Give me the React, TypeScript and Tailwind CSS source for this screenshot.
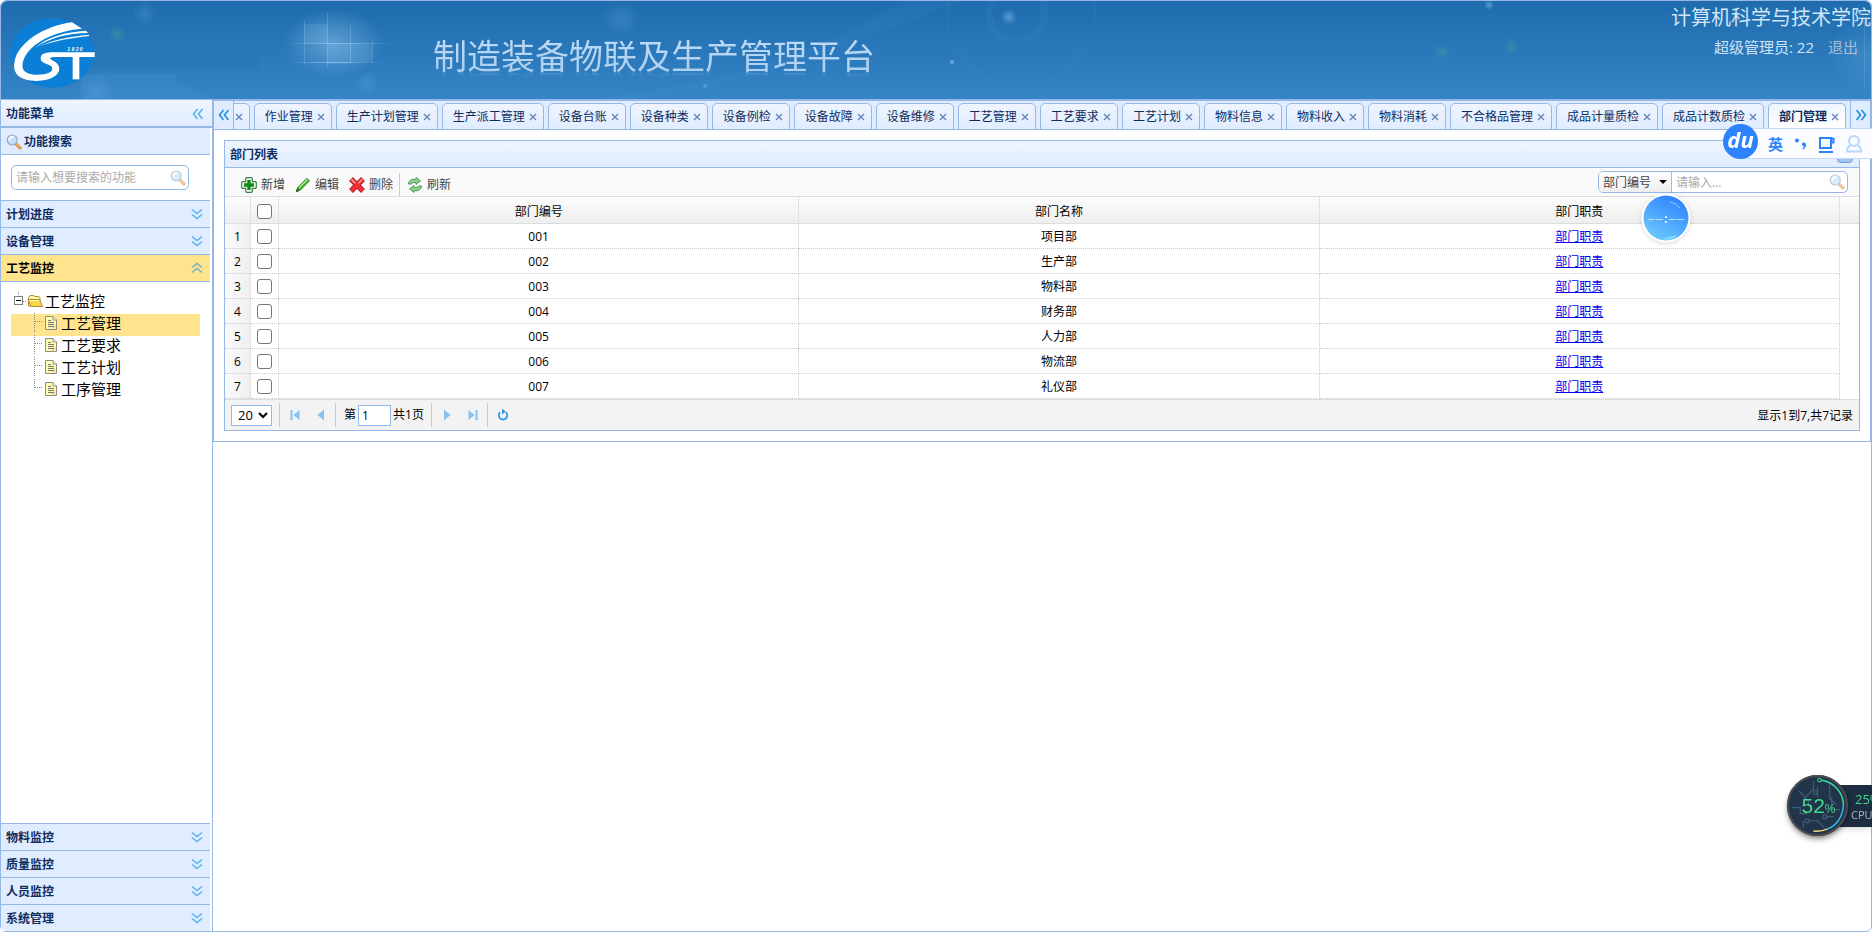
import { useState, type ReactNode } from 'react'

interface Department {
  code: string
  name: string
}

const departments: Department[] = [
  { code: '001', name: '项目部' },
  { code: '002', name: '生产部' },
  { code: '003', name: '物料部' },
  { code: '004', name: '财务部' },
  { code: '005', name: '人力部' },
  { code: '006', name: '物流部' },
  { code: '007', name: '礼仪部' },
]

const tabs = [
  '工序管理',
  '作业管理',
  '生产计划管理',
  '生产派工管理',
  '设备台账',
  '设备种类',
  '设备例检',
  '设备故障',
  '设备维修',
  '工艺管理',
  '工艺要求',
  '工艺计划',
  '物料信息',
  '物料收入',
  '物料消耗',
  '不合格品管理',
  '成品计量质检',
  '成品计数质检',
  '部门管理',
]

const treeItems = ['工艺管理', '工艺要求', '工艺计划', '工序管理']

/* ---------- icons ---------- */

function DoubleChevron({ className = '' }: { className?: string }) {
  return (
    <svg viewBox="0 0 12 12" className={`size-3 ${className}`} fill="none" stroke="currentColor" strokeWidth="1.6">
      <path d="M1 1.5 6 5.5 11 1.5M1 6.5 6 10.5 11 6.5" />
    </svg>
  )
}

function SearchIcon({ className = '' }: { className?: string }) {
  return (
    <svg viewBox="0 0 16 16" className={`size-4 shrink-0 ${className}`}>
      <path d="m10 10 4 3.8" stroke="#c47a2c" strokeWidth="3" strokeLinecap="round" />
      <path d="m10 9.8 4 3.8" stroke="#f6b35e" strokeWidth="1.6" strokeLinecap="round" />
      <circle cx="6.2" cy="6" r="5" fill="#bfe0fb" stroke="#9aa9b8" strokeWidth="1.2" />
      <path d="M3.2 6a3.2 3.2 0 0 1 4-3" stroke="#fff" strokeWidth="1.6" fill="none" strokeLinecap="round" />
    </svg>
  )
}

function AddIcon() {
  return (
    <svg viewBox="0 0 16 16" className="size-4">
      <path
        d="M5.5.7h5l.8.8v3.2h3.2l.8.8v5l-.8.8h-3.2v3.2l-.8.8h-5l-.8-.8v-3.2H1.5l-.8-.8v-5l.8-.8h3.2V1.5z"
        fill="#f4fbf2"
        stroke="#3f7f4b"
        strokeWidth="1.2"
      />
      <path d="M6.3 3h3.4v3.3H13v3.4H9.7V13H6.3V9.7H3V6.3h3.3z" fill="#138a13" />
    </svg>
  )
}

function EditIcon() {
  return (
    <svg viewBox="0 0 16 16" className="size-4">
      <path d="M1.2 14.8 2.6 10.6 11.8 1.4l2.6 2.4-9.2 9.4z" fill="#43b62b" stroke="#2c7d26" />
      <path d="m4 10.8 8.4-8.4" stroke="#b5ee8f" strokeWidth="1.4" />
      <path d="m1 15 1.2-3.6 2.4 2.2z" fill="#305c2b" />
    </svg>
  )
}

function DeleteIcon() {
  return (
    <svg viewBox="0 0 16 16" className="size-4">
      <path d="m2 2 12 12M14 2 2 14" stroke="#b3161b" strokeWidth="5.4" />
      <path d="m2.4 2.4 11.2 11.2M13.6 2.4 2.4 13.6" stroke="#ee3236" strokeWidth="3.8" />
      <path d="m2.4 2.4 4 3.8M13.2 2.4l-3.8 3.8" stroke="#f99" strokeWidth="1.6" />
    </svg>
  )
}

function ReloadIcon() {
  return (
    <svg viewBox="0 0 16 16" className="size-4" fill="#8fd08d" stroke="#4d9b57" strokeLinejoin="round">
      <path d="M1.5 7C1.5 3.6 4.5 1.8 9 2.3V.6L13.500 4 9 7.400V5.500C6.500 5.200 5 5.600 4.400 7z" />
      <path d="M14.5 9c0 3.4-3 5.2-7.500 4.700v1.700L2.500 12 7 8.600v1.900c2.500.3 4-.1 4.600-1.500z" />
    </svg>
  )
}

function FolderIcon() {
  return (
    <svg viewBox="0 0 16 16" className="size-4">
      <path d="M1.5 4.5V13H13V4.5L11.5 3.5H8L6.5 2.5H3z" fill="#fff3a8" stroke="#b08d2e" />
      <path d="M1 6.5h11.5l3 7H4z" fill="#f8d64e" stroke="#b08d2e" />
      <path d="M2.5 7.5h9.5" stroke="#fff6c2" />
    </svg>
  )
}

function FileIcon() {
  return (
    <svg viewBox="0 0 16 16" className="size-4">
      <path d="M2.5 1.5H10L13.5 5v9.5h-11z" fill="#fffcae" stroke="#8d8d86" />
      <path d="M10 1.5V5h3.5" fill="#fff" stroke="#8d8d86" />
      <path d="M12.5 9.5v4H8z" fill="#f5d59a" />
      <path d="M5 5.5h3M5 7.5h6M5 9.5h6M5 11.5h6" stroke="#777" />
    </svg>
  )
}

function Logo() {
  return (
    <svg viewBox="0 0 300 246" className="h-[82px] w-[100px]" role="img" aria-label="CST 1920">
      <ellipse cx="144" cy="123" rx="126" ry="104" fill="#0b7fd6" />
      {/* sweeping arc and its thin tails */}
      <path
        d="M32 148C42 92 120 42 204 31L234 50C168 55 88 84 62 136C46 170 60 186 92 188C124 190 150 182 144 166C140 154 112 158 110 140C109 126 122 122 142 121H272V135H150C132 136 138 142 150 148C180 164 170 204 100 207C56 208 22 190 32 148Z"
        fill="#fff"
      />
      <path d="M92 108C130 74 184 60 246 56L252 63C190 64 136 78 92 108Z" fill="#fff" />
      <path d="M104 104C150 82 196 74 254 68L256 72C200 78 152 86 104 104Z" fill="#fff" />
      <rect x="206" y="128" width="20" height="74" fill="#fff" />
      <text x="190" y="116" fontSize="15" fontWeight="700" fontStyle="italic" fill="#fff" fontFamily="Liberation Sans, sans-serif">
        1 9 2 0
      </text>
    </svg>
  )
}

/* Faint light shapes over the banner gradient */
function BannerArt() {
  return (
    <svg className="absolute inset-0 size-full" preserveAspectRatio="xMinYMin slice" aria-hidden="true">
      <defs>
        <radialGradient id="glow">
          <stop offset="0" stopColor="#9fd0f5" stopOpacity="0.45" />
          <stop offset="1" stopColor="#9fd0f5" stopOpacity="0" />
        </radialGradient>
        <radialGradient id="haze">
          <stop offset="0" stopColor="#6fb4e6" stopOpacity="0.25" />
          <stop offset="1" stopColor="#6fb4e6" stopOpacity="0" />
        </radialGradient>
        <radialGradient id="spark">
          <stop offset="0" stopColor="#3fae8a" stopOpacity="0.4" />
          <stop offset="1" stopColor="#3fae8a" stopOpacity="0" />
        </radialGradient>
        <linearGradient id="beam">
          <stop offset="0" stopColor="#bfe2fa" stopOpacity="0" />
          <stop offset="0.5" stopColor="#bfe2fa" stopOpacity="0.5" />
          <stop offset="1" stopColor="#bfe2fa" stopOpacity="0" />
        </linearGradient>
      </defs>
      <ellipse cx="332" cy="42" rx="50" ry="34" fill="url(#glow)" />
      <g fill="#a8d4f5" fillOpacity="0.12">
        <rect x="303" y="23" width="24" height="20" />
        <rect x="326" y="43" width="24" height="20" />
        <rect x="349" y="43" width="22" height="18" />
      </g>
      <rect x="284" y="42" width="110" height="1" fill="url(#beam)" />
      <rect x="284" y="61" width="100" height="1" fill="url(#beam)" />
      <g fill="#bfe2fa" fillOpacity="0.22">
        <rect x="303" y="20" width="1" height="44" />
        <rect x="326" y="12" width="1" height="54" />
        <rect x="349" y="24" width="1" height="38" />
        <rect x="371" y="40" width="1" height="22" />
      </g>
      <rect x="88" y="53" width="170" height="17" fill="#1a62a3" fillOpacity="0.15" />
      <path d="M80 73h99l-6 5 40 20H80z" fill="#5aa6dc" fillOpacity="0.14" />
      <circle cx="116" cy="33" r="9" fill="url(#spark)" />
      <circle cx="95" cy="92" r="20" fill="url(#haze)" />
      <circle cx="144" cy="12" r="12" fill="url(#haze)" />
      <circle cx="366" cy="82" r="12" fill="url(#haze)" />
      <circle cx="620" cy="18" r="18" fill="url(#haze)" />
      <circle cx="1016" cy="12" r="28" fill="none" stroke="#5aa2d8" strokeOpacity="0.08" strokeWidth="8" />
      <circle cx="1020" cy="10" r="74" fill="none" stroke="#5aa2d8" strokeOpacity="0.08" strokeWidth="2" />
      <circle cx="1008" cy="16" r="8" fill="url(#glow)" />
      <circle cx="951" cy="61" r="2" fill="#7fc0ec" fillOpacity="0.7" />
      <circle cx="704" cy="85" r="2" fill="#7fc0ec" fillOpacity="0.4" />
      <path d="M640 98C780 74 860 40 960 0h-60C820 50 740 80 590 98z" fill="#5aa6dc" fillOpacity="0.08" />
      <circle cx="1441" cy="51" r="8" fill="url(#spark)" />
      <circle cx="1510" cy="45" r="8" fill="url(#spark)" />
      <circle cx="1488" cy="4" r="5" fill="url(#glow)" />
      <circle cx="1868" cy="54" r="40" fill="url(#haze)" />
      <rect x="1863" y="20" width="1" height="66" fill="#bfe2fa" fillOpacity="0.15" />
    </svg>
  )
}

/* ---------- layout ---------- */

function Header() {
  return (
    <header className="relative flex h-[99px] justify-between overflow-hidden rounded-t-md border-b border-[#95b8e7] bg-linear-to-b from-[#1e6cae] to-[#3584c6]">
      <BannerArt />
      <div className="relative flex items-start">
        <div className="pt-[11px] pl-[3px]">
          <Logo />
        </div>
        <h1 className="ml-[329px] bg-linear-to-b from-[#d3e7f9] to-[#a9cdee] bg-clip-text pt-8 text-[34px] leading-[46px] text-transparent [-webkit-box-reflect:below_-14px_linear-gradient(transparent_84%,rgba(0,0,0,0.5)_100%)]">
          制造装备物联及生产管理平台
        </h1>
      </div>
      <div className="relative text-right text-[#cfe4f6]">
        <div className="pt-px text-xl leading-8">计算机科学与技术学院</div>
        <div className="flex justify-end gap-[14px] pr-[13px] text-[15px] leading-[26px]">
          <span>超级管理员: 22</span>
          <a href="#logout" className="text-[#a9bdd0]">
            退出
          </a>
        </div>
      </div>
    </header>
  )
}

function AccordionHeader({ title, active = false, className = '' }: { title: string; active?: boolean; className?: string }) {
  return (
    <button
      type="button"
      aria-expanded={active}
      className={`mr-[2px] flex shrink-0 items-center justify-between border-[#95b8e7] pr-[7px] pl-[5px] text-xs leading-6 font-bold ${
        active ? 'bg-[#ffe48d] text-black' : 'bg-[#e0ecff] text-[#0e2d5f]'
      } ${className}`}
    >
      <span className="pt-[2px]">{title}</span>
      <DoubleChevron className={active ? 'rotate-180 text-[#6fb1c4]' : 'text-[#5db3ee]'} />
    </button>
  )
}

function Tree() {
  const [selected, setSelected] = useState('工艺管理')

  return (
    <ul className="py-[10px] pr-3 pl-[10px] text-[15px] leading-[22px] text-black">
      <li>
        <div className="flex h-[22px] items-center pb-1">
          <svg viewBox="0 0 16 22" className="h-[22px] w-4 shrink-0" fill="none" shapeRendering="crispEdges">
            <path d="M7.5 2v4M12 11.5h4" stroke="#888" strokeDasharray="1 1" />
            <rect x="3.5" y="6.5" width="8" height="8" fill="#fff" stroke="#808080" />
            <path d="M5 10.5h5" stroke="#000" />
          </svg>
          <span className="w-[18px]">
            <FolderIcon />
          </span>
          工艺监控
        </div>
        <ul>
          {treeItems.map((item, i) => (
            <li key={item}>
              <button
                type="button"
                onClick={() => setSelected(item)}
                className={`flex h-[22px] w-full items-center pb-1 pl-4 ${item === selected ? 'bg-[#ffe48d]' : ''}`}
              >
                <svg viewBox="0 0 16 22" className="h-[22px] w-4 shrink-0" fill="none" stroke="#888" shapeRendering="crispEdges">
                  <path d={i === treeItems.length - 1 ? 'M7.5 1v9' : 'M7.5 1v19'} strokeDasharray="1 1" />
                  <path d="M8 9.5h8" strokeDasharray="1 1" />
                </svg>
                <span className="w-[18px]">
                  <FileIcon />
                </span>
                {item}
              </button>
            </li>
          ))}
        </ul>
      </li>
    </ul>
  )
}

function Sidebar() {
  return (
    <aside className="flex w-[212px] shrink-0 flex-col border-r border-[#95b8e7] bg-white">
      <div className="flex h-7 items-center justify-between border-b-2 border-[#95b8e7] bg-linear-to-b from-[#eff5ff] to-[#e0ecff] pt-px pr-2 pl-[5px] text-xs font-bold text-[#0e2d5f]">
        功能菜单
        <button type="button" aria-label="折叠菜单">
          <DoubleChevron className="rotate-90 text-[#5db3ee]" />
        </button>
      </div>
      <div className="mr-[2px] flex h-[27px] items-center gap-[2px] border-b border-[#95b8e7] bg-[#e0ecff] pt-px pl-[5px] text-xs font-bold text-[#0e2d5f]">
        <SearchIcon />
        功能搜索
      </div>
      <div className="p-[10px]">
        <label className="flex h-[25px] w-[178px] items-center rounded-[5px] border border-[#95b8e7] pr-[2px] pl-1">
          <input
            aria-label="功能搜索"
            placeholder="请输入想要搜索的功能"
            className="min-w-0 flex-1 text-xs outline-none placeholder:text-[#aaa]"
          />
          <SearchIcon className="opacity-60" />
        </label>
      </div>
      <AccordionHeader title="计划进度" className="border-t" />
      <AccordionHeader title="设备管理" className="border-t" />
      <AccordionHeader title="工艺监控" active className="border-y" />
      <div className="flex-1">
        <Tree />
      </div>
      <AccordionHeader title="物料监控" className="border-t" />
      <AccordionHeader title="质量监控" className="border-t" />
      <AccordionHeader title="人员监控" className="border-t" />
      <AccordionHeader title="系统管理" className="rounded-bl-[5px] border-t" />
    </aside>
  )
}

function TabBar() {
  const [current, setCurrent] = useState('部门管理')

  return (
    <nav className="flex h-[29px] border-b border-[#95b8e7] bg-[#e0ecff]">
      <button type="button" aria-label="向左滚动" className="flex w-5 shrink-0 items-center justify-center border-r border-[#95b8e7]">
        <DoubleChevron className="rotate-90 text-[#1a8fe0]" />
      </button>
      <div className="-mb-px flex min-w-0 flex-1 items-end justify-end gap-1 overflow-hidden pr-1">
        {tabs.map((tab) => (
          <div
            key={tab}
            className={`flex h-[27px] shrink-0 items-center gap-1 rounded-t-[5px] border border-[#95b8e7] pt-px pr-[6px] pl-[10px] text-xs text-[#0e2d5f] ${
              tab === current ? 'border-b-white bg-linear-to-b from-[#eff5ff] to-white font-bold' : 'bg-linear-to-b from-[#eff5ff] to-[#e0ecff]'
            }`}
          >
            <button type="button" onClick={() => setCurrent(tab)}>
              {tab}
            </button>
            <button type="button" aria-label={`关闭${tab}`}>
              <svg viewBox="0 0 8 8" className="size-2" stroke="#6384b8" strokeWidth="1.3">
                <path d="m1 1 6 6M7 1 1 7" />
              </svg>
            </button>
          </div>
        ))}
      </div>
      <button type="button" aria-label="向右滚动" className="flex w-5 shrink-0 items-center justify-center border-l border-[#95b8e7]">
        <DoubleChevron className="-rotate-90 text-[#1a8fe0]" />
      </button>
    </nav>
  )
}

function ToolButton({ icon, children }: { icon: ReactNode; children: ReactNode }) {
  return (
    <button type="button" className="flex items-center gap-1">
      {icon}
      {children}
    </button>
  )
}

function Toolbar() {
  return (
    <div className="flex h-[29px] items-center justify-between border-b border-[#ddd] bg-[#fafafa] pr-[11px] pl-4 text-xs text-[#444]">
      <div className="flex items-center gap-[10px] self-stretch pt-[5px]">
        <ToolButton icon={<AddIcon />}>新增</ToolButton>
        <ToolButton icon={<EditIcon />}>编辑</ToolButton>
        <ToolButton icon={<DeleteIcon />}>删除</ToolButton>
        <span className="-ml-1 w-px self-stretch bg-[#ccc]" />
        <span className="-ml-[3px]">
          <ToolButton icon={<ReloadIcon />}>刷新</ToolButton>
        </span>
      </div>
      <div className="flex h-[22px] w-[250px] items-center overflow-hidden rounded-[5px] border border-[#95b8e7] bg-white">
        <div className="relative flex h-full w-[73px] items-center border-r border-[#bbb] bg-linear-to-b from-white to-[#eee]">
          <select aria-label="查询字段" className="w-full appearance-none pt-px pl-1 outline-none">
            <option>部门编号</option>
            <option>部门名称</option>
          </select>
          <svg viewBox="0 0 8 4" className="pointer-events-none absolute right-[4px] h-1 w-2">
            <path d="M0 0h8L4 4z" fill="#000" />
          </svg>
        </div>
        <input aria-label="查询内容" placeholder="请输入..." className="min-w-0 flex-1 pt-px pl-1 outline-none placeholder:text-[#aaa]" />
        <SearchIcon className="mr-[2px] opacity-60" />
      </div>
    </div>
  )
}

const headCell = 'border-r border-b border-[#ddd] border-r-[#ccc] pt-[3px] font-normal [border-right-style:dotted]'
const cell = 'border-r border-b border-dotted border-[#ccc]'
const textCell = `${cell} pt-[2px]`
const checkboxClassName = 'mx-auto block size-[15px] appearance-none rounded-[3px] border border-[#767676] bg-white checked:bg-[#0075ff]'

function DepartmentGrid() {
  return (
    <table className="w-full table-fixed border-separate border-spacing-0 text-center text-xs text-black">
      <colgroup>
        <col className="w-[26px]" />
        <col className="w-[28px]" />
        <col />
        <col />
        <col />
        <col className="w-[19px]" />
      </colgroup>
      <thead>
        <tr className="h-[27px] bg-linear-to-b from-[#fcfcfc] to-[#eee]">
          <th className={headCell} />
          <th className={headCell}>
            <input type="checkbox" aria-label="全选" className={checkboxClassName} />
          </th>
          <th className={headCell}>部门编号</th>
          <th className={headCell}>部门名称</th>
          <th className={headCell}>部门职责</th>
          <th className="border-b border-[#ddd]" />
        </tr>
      </thead>
      <tbody>
        {departments.map((dept, i) => (
          <tr key={dept.code} className="h-[25px]">
            <td className={`${textCell} bg-linear-to-r from-[#fafafa] to-[#efefef]`}>{i + 1}</td>
            <td className={cell}>
              <input type="checkbox" aria-label={`选择${dept.name}`} className={checkboxClassName} />
            </td>
            <td className={textCell}>{dept.code}</td>
            <td className={textCell}>{dept.name}</td>
            <td className={textCell}>
              <a href={`#duty-${dept.code}`} className="text-[#0000ee] underline">
                部门职责
              </a>
            </td>
            <td />
          </tr>
        ))}
      </tbody>
    </table>
  )
}

function Separator() {
  return <span className="h-6 w-px bg-[#ccc]" />
}

function PagerButton({ label, children }: { label: string; children: ReactNode }) {
  return (
    <button type="button" aria-label={label} className="flex w-[26px] items-center justify-center">
      <svg viewBox="0 0 12 12" className="size-3" fill="#84c3f2">
        {children}
      </svg>
    </button>
  )
}

function Pager() {
  return (
    <div className="flex h-[31px] items-center justify-between border-t border-[#ddd] bg-[#f3f3f3] px-[6px] text-xs text-black">
      <div className="flex items-center">
        <div className="relative mr-[7px] flex h-[21px] w-[41px] items-center border border-[#95b8e7] bg-white">
          <select aria-label="每页条数" className="w-full appearance-none pl-[6px] text-[13px] leading-4 outline-none">
            <option>20</option>
            <option>50</option>
          </select>
          <svg viewBox="0 0 10 7" className="pointer-events-none absolute right-[3px] h-[7px] w-[10px]" fill="none">
            <path d="m1 1 4 4 4-4" stroke="#000" strokeWidth="2" />
          </svg>
        </div>
        <Separator />
        <span className="flex pr-px pl-[2px]">
          <PagerButton label="第一页">
            <path d="M1.5 1h2v10h-2zM10.5 1v10l-6-5z" />
          </PagerButton>
          <PagerButton label="上一页">
            <path d="M9 .5v11L2.500 6z" />
          </PagerButton>
        </span>
        <Separator />
        <label className="mr-[7px] ml-2 flex items-center gap-[2px]">
          第
          <input defaultValue="1" className="h-[21px] w-[33px] border border-[#95b8e7] bg-white px-[3px] outline-none" />
          共1页
        </label>
        <Separator />
        <span className="flex pr-px pl-[2px]">
          <PagerButton label="下一页">
            <path d="M3 .5v11L9.5 6z" />
          </PagerButton>
          <PagerButton label="最后一页">
            <path d="M1.5 1v10l6-5zM8.5 1h2v10h-2z" />
          </PagerButton>
        </span>
        <Separator />
        <button type="button" aria-label="刷新" className="ml-[9px]">
          <svg viewBox="0 0 12 12" className="size-3" fill="none">
            <path d="M3 3.4a4.2 4.2 0 1 0 6 0" stroke="#2b95dc" strokeWidth="1.8" />
            <path d="M5 0v5.2l4-2.6z" fill="#2b95dc" />
          </svg>
        </button>
      </div>
      <span className="pt-px">显示1到7,共7记录</span>
    </div>
  )
}

function DepartmentPanel() {
  return (
    <section className="border border-[#95b8e7]">
      <div className="flex h-[27px] items-center justify-between border-b border-[#95b8e7] bg-linear-to-b from-[#eff5ff] to-[#e0ecff] pt-px pr-[6px] pl-[5px] text-xs font-bold text-[#0e2d5f]">
        <h2>部门列表</h2>
        <button type="button" aria-label="折叠" className="h-4 w-4 rounded-[4px] border border-[#6f9bd6] bg-[#a5c6f2]" />
      </div>
      <Toolbar />
      <DepartmentGrid />
      <Pager />
    </section>
  )
}

/* ---------- floating desktop widgets ---------- */

function InputMethodBar() {
  return (
    <div className="fixed top-[123px] right-0 flex w-[149px] items-center">
      <div className="z-10 flex size-[35px] shrink-0 items-center justify-center rounded-full bg-[#2d82fd] pb-1 font-['Open_Sans',sans-serif] text-[22px] leading-none font-bold text-white italic">
        du
      </div>
      <div className="mt-[5px] -ml-4 flex h-[31px] flex-1 items-center gap-[10px] overflow-hidden border-y border-[#c3d9f8] bg-[#fafcff] pl-[26px] text-[#2d82fd]">
        <span className="text-[15px] leading-5 font-bold">英</span>
        <svg viewBox="0 0 14 14" className="size-[14px] shrink-0" fill="currentColor">
          <circle cx="4" cy="3.5" r="2" />
          <path d="M9 6.5a2.2 2.2 0 0 1 4 1c0 2.6-1.2 4-3 5l-.6-.8c1-.7 1.5-1.5 1.5-2.4C9.7 9.2 8.6 8 9 6.5z" />
        </svg>
        <svg viewBox="0 0 18 18" className="size-[18px] shrink-0" fill="none" stroke="currentColor" strokeWidth="2">
          <path d="M3 3h11v10H3zM14 3.5h2.5v4H14M2 17h14" />
        </svg>
        <svg viewBox="0 0 18 18" className="size-[18px] shrink-0" fill="none" stroke="#b9d6fb" strokeWidth="2">
          <circle cx="9" cy="6" r="5" />
          <path d="M6 10c-2.5 1-4 3-4 6.5h14c0-3.5-1.5-5.5-4-6.5" />
        </svg>
        <svg viewBox="0 0 18 18" className="-ml-px size-[18px] shrink-0" fill="#2d6cc8">
          <path d="M0 1h7v7H0zM0 10h7v7H0zM10 1h7v7h-7zM10 10h7v7h-7z" />
        </svg>
      </div>
    </div>
  )
}

function ClockBubble() {
  return (
    <svg viewBox="0 0 56 56" className="fixed top-[190px] right-[178px] size-14 drop-shadow-sm">
      <defs>
        <linearGradient id="bubble" x1="0.8" y1="0.1" x2="0.3" y2="1">
          <stop offset="0" stopColor="#2f86fd" />
          <stop offset="1" stopColor="#6cc8ff" />
        </linearGradient>
      </defs>
      <circle cx="28" cy="28" r="24.5" fill="#fff" />
      <circle cx="28" cy="28" r="22.5" fill="url(#bubble)" />
      <path d="M32 12q6 1 10 6" stroke="#9cc8ff" fill="none" />
      <path d="M24 49q8-3 16-4-7 6-16 4z" fill="#7fdcff" />
      <path d="M10 29.5h7M18 29.5h7M31 29.5h7M39 29.5h7" stroke="#b9dcff" />
      <path d="M27 27h2M27 32h2" stroke="#d5eaff" strokeWidth="2" />
    </svg>
  )
}

function CpuMeter() {
  return (
    <div className="fixed top-[775px] right-0 flex w-[85px] items-center">
      <div className="relative z-10 flex size-[61px] shrink-0 items-center justify-center rounded-full bg-[#22344a] text-[#41d98b] shadow-md shadow-black/40">
        <svg viewBox="0 0 60 60" className="absolute inset-0 size-full" fill="none">
          <circle cx="30" cy="30" r="29" stroke="#4a4c50" strokeWidth="2" />
          <g stroke="#3f5d78" strokeWidth="1.2">
            <path d="M26 6v8l-9 9M12 16l9 9v6M5 32h8v6h7M30 12v10M42 9v14l6 6M44 22v12h8M22 45h8l6 6M16 52v-7M38 41h8" />
            <circle cx="28" cy="17" r="2" />
            <circle cx="20" cy="45" r="2" />
            <circle cx="37" cy="41" r="2" />
          </g>
          <path d="M32 5C45 6 55 16 55.5 29" stroke="#3ddc97" strokeWidth="1.5" />
          <path d="M55.5 29C55 42 48 50 40 53" stroke="#35b8e8" strokeWidth="1.5" />
          <path d="M40 53q-7 3-14 2" stroke="#f2dd72" strokeWidth="1.5" />
          <circle cx="32" cy="5" r="1.8" stroke="#3ddc97" fill="#22344a" />
        </svg>
        <span className="relative pl-[2px] font-['Liberation_Sans',sans-serif] text-[21px] leading-none">
          52<span className="text-xs">%</span>
        </span>
      </div>
      <div className="-ml-4 h-[42px] flex-1 overflow-hidden bg-[#1d2d42] pt-[6px] pl-[19px] font-['Open_Sans',sans-serif] whitespace-nowrap shadow-md">
        <div className="pl-1 text-[13px] leading-4 text-[#41d98b]">25%</div>
        <div className="text-[11px] leading-4 text-[#a9b4c0]">CPU</div>
      </div>
    </div>
  )
}

export default function App() {
  return (
    <div className="flex min-h-screen flex-col rounded-md border border-[#95b8e7] bg-white font-['Open_Sans','Noto_Sans_CJK_SC',sans-serif]">
      <Header />
      <div className="flex flex-1">
        <Sidebar />
        <main className="min-w-0 flex-1">
          <div className="border border-[#95b8e7]">
            <TabBar />
            <div className="p-[10px]">
              <DepartmentPanel />
            </div>
          </div>
        </main>
      </div>
      <InputMethodBar />
      <ClockBubble />
      <CpuMeter />
    </div>
  )
}
